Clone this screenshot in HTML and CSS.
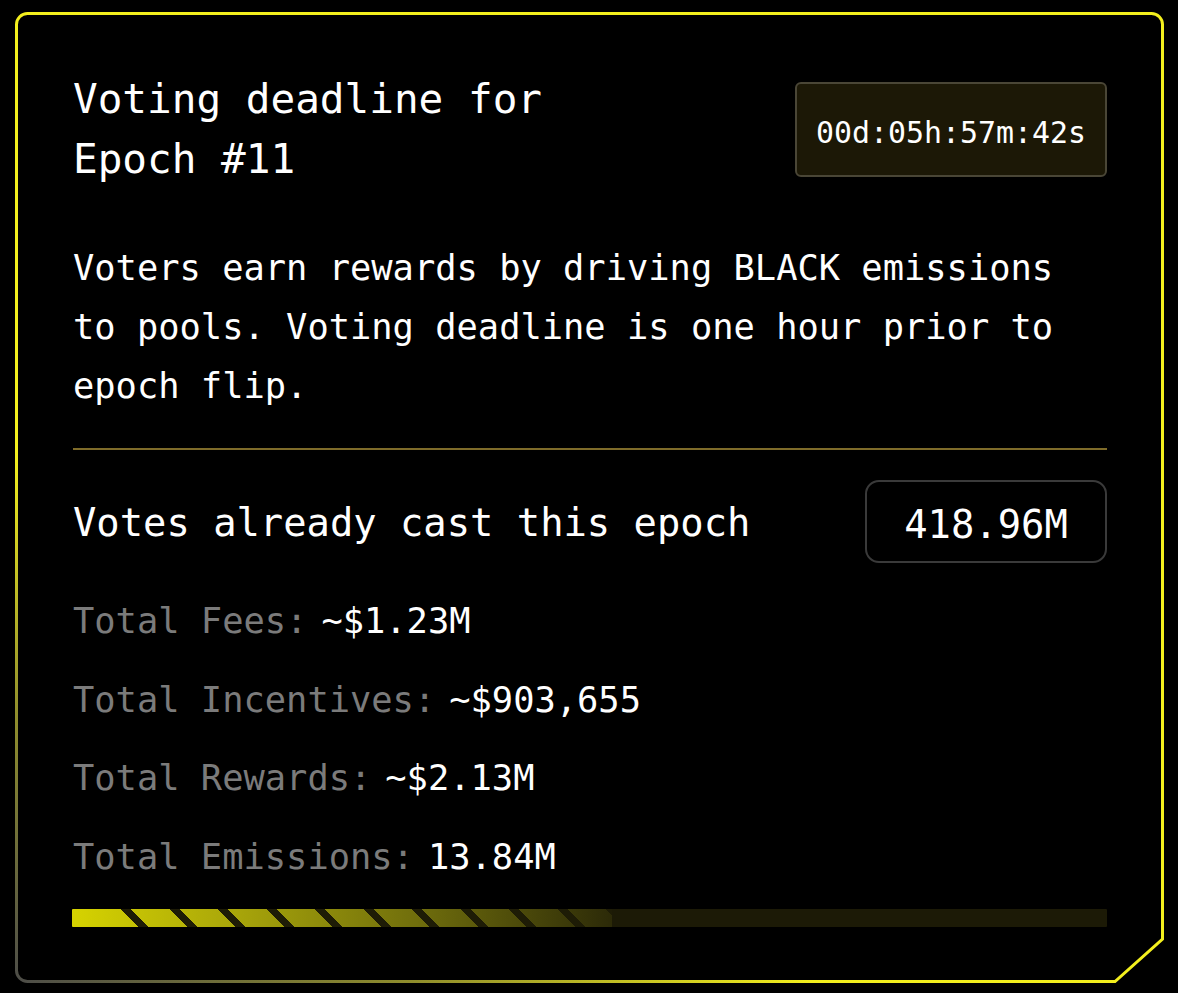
FILE: index.html
```html
<!DOCTYPE html>
<html lang="en">
<head>
<meta charset="utf-8">
<title>Voting deadline</title>
<link rel="stylesheet" href="styles.css">
</head>
<body>
<div class="card">
  <svg class="frame" width="1149" height="971" viewBox="0 0 1149 971" aria-hidden="true">
    <defs>
      <linearGradient id="edge" gradientUnits="userSpaceOnUse" x1="0" y1="971" x2="246" y2="602">
        <stop offset="0" stop-color="#4c4c48"/>
        <stop offset="0.5" stop-color="#8f8d2c"/>
        <stop offset="1" stop-color="#f3ef1d"/>
      </linearGradient>
    </defs>
    <path d="M1.5 12.5 A11 11 0 0 1 12.5 1.5 H1136.5 A11 11 0 0 1 1147.5 12.5 V927 L1100 969.5 H12.5 A11 11 0 0 1 1.5 958.5 Z" fill="none" stroke="url(#edge)" stroke-width="3" stroke-linejoin="miter"/>
  </svg>

  <div class="header">
    <h1 class="title">Voting deadline for Epoch #11</h1>
    <div class="timer">00d:05h:57m:42s</div>
  </div>

  <p class="desc">Voters earn rewards by driving BLACK emissions to pools. Voting deadline is one hour prior to epoch flip.</p>

  <div class="divider"></div>

  <div class="votes-row">
    <h2 class="votes-label">Votes already cast this epoch</h2>
    <div class="votes-value">418.96M</div>
  </div>

  <ul class="stats">
    <li class="stat"><span class="stat-label">Total Fees:</span><span class="stat-value">~$1.23M</span></li>
    <li class="stat"><span class="stat-label">Total Incentives:</span><span class="stat-value">~$903,655</span></li>
    <li class="stat"><span class="stat-label">Total Rewards:</span><span class="stat-value">~$2.13M</span></li>
    <li class="stat"><span class="stat-label">Total Emissions:</span><span class="stat-value">13.84M</span></li>
  </ul>

  <div class="bar"><div class="bar-fill" style="width: 52.2%"></div></div>
</div>
</body>
</html>
```
FILE: styles.css
```css
* { box-sizing: border-box; }

html, body {
  margin: 0;
  padding: 0;
  background: #000;
}

body {
  font-family: "DejaVu Sans Mono", "Liberation Mono", monospace;
  color: #fff;
}

.card {
  position: relative;
  width: 1149px;
  height: 971px;
  margin: 12px 0 0 15px;
  padding: 57px 57px 0 58px;
  background: #000;
}

.frame {
  position: absolute;
  left: 0;
  top: 0;
  pointer-events: none;
}

.header {
  display: flex;
  align-items: center;
  justify-content: space-between;
}

.title {
  margin: 0;
  max-width: 520px;
  font-size: 41px;
  font-weight: normal;
  line-height: 60px;
}

.timer {
  display: flex;
  align-items: center;
  justify-content: center;
  width: 312px;
  height: 95px;
  padding-top: 6px;
  border: 2px solid #4a4636;
  border-radius: 6px;
  background: #1c1806;
  font-size: 29.9px;
  white-space: nowrap;
}

.desc {
  margin: 49px 0 0;
  font-size: 35.4px;
  line-height: 59px;
}

.divider {
  height: 2px;
  margin-top: 33px;
  background: #7f6c2a;
}

.votes-row {
  display: flex;
  align-items: center;
  justify-content: space-between;
  margin-top: 30px;
}

.votes-label {
  margin: 0;
  padding-top: 4px;
  font-size: 38.8px;
  font-weight: normal;
  line-height: 1.2;
}

.votes-value {
  display: flex;
  align-items: center;
  justify-content: center;
  width: 242px;
  height: 83px;
  padding-top: 6px;
  border: 2px solid #3a3a3a;
  border-radius: 14px;
  font-size: 38.8px;
}

.stats {
  display: flex;
  flex-direction: column;
  gap: 25.5px;
  margin: 31px 0 0;
  padding: 0;
  list-style: none;
}

.stat {
  display: flex;
  gap: 14px;
  font-size: 35.4px;
  line-height: 53px;
}

.stat-label {
  color: #7b7b7b;
}

.stat-value {
  color: #fff;
}

.bar {
  height: 18px;
  margin: 26.5px 0 0 -1px;
  background: #1c1a06;
  border-radius: 1px;
}

.bar-fill {
  height: 100%;
  border-radius: 1px 0 0 1px;
  background:
    repeating-linear-gradient(45deg, transparent 0 13.1px, #1e1c06 13.1px 20.2px, transparent 20.2px 34.3px) right top / calc(100% - 48px) 100% no-repeat,
    linear-gradient(90deg, #d6d300 0%, #a9a60a 30%, #6e6c0c 65%, #2c2a08 100%);
}
```
